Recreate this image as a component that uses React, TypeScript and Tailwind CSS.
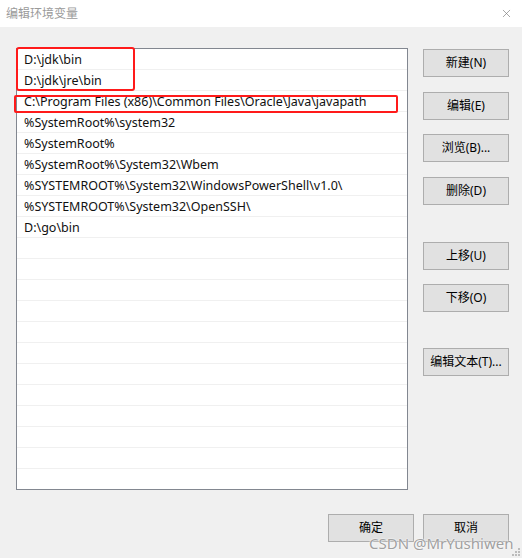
import { X } from 'lucide-react'

const paths = [
  'D:\\jdk\\bin',
  'D:\\jdk\\jre\\bin',
  'C:\\Program Files (x86)\\Common Files\\Oracle\\Java\\javapath',
  '%SystemRoot%\\system32',
  '%SystemRoot%',
  '%SystemRoot%\\System32\\Wbem',
  '%SYSTEMROOT%\\System32\\WindowsPowerShell\\v1.0\\',
  '%SYSTEMROOT%\\System32\\OpenSSH\\',
  'D:\\go\\bin',
]

const rows = [...paths, ...Array(21 - paths.length).fill('')]

function Button({ label, className = '' }: { label: string; className?: string }) {
  return (
    <button
      className={`h-[28px] w-[86px] border border-[#adadad] bg-[#e1e1e1] text-[12px] text-black ${className}`}
    >
      {label}
    </button>
  )
}

export default function App() {
  return (
    <div
      className="relative flex h-[558px] w-[522px] flex-col bg-[#f0f0f0]"
      style={{ fontFamily: '"Noto Sans", "Noto Sans CJK SC", sans-serif' }}
    >
      {/* Title bar */}
      <div className="flex h-[27px] items-center justify-between bg-white pl-[6px] pr-[9px]">
        <span className="text-[12px] text-[#9a9a9a]">编辑环境变量</span>
        <X className="h-[13px] w-[13px] text-[#777]" strokeWidth={1.2} />
      </div>

      <div className="flex pl-[16px] pt-[21px]">
        {/* Path list */}
        <div className="relative h-[442px] w-[392px] overflow-hidden border border-[#828790] bg-white">
          {rows.map((p, i) => (
            <div
              key={i}
              className="flex h-[21px] items-center border-b border-[#f0f0f0] pl-[7px] pt-[3px] text-[12.5px] leading-none text-[#111]"
            >
              {p}
            </div>
          ))}
        </div>

        {/* Action buttons */}
        <div className="ml-[15px] flex flex-col pt-px">
          <Button label="新建(N)" />
          <Button label="编辑(E)" className="mt-[15px]" />
          <Button label="浏览(B)..." className="mt-[14px]" />
          <Button label="删除(D)" className="mt-[15px]" />
          <Button label="上移(U)" className="mt-[37px]" />
          <Button label="下移(O)" className="mt-[14px]" />
          <Button label="编辑文本(T)..." className="mt-[36px]" />
        </div>
      </div>

      <div className="flex justify-end gap-[9px] pr-[13px] pt-[24px]">
        <Button label="确定" />
        <Button label="取消" />
      </div>

      {/* Highlight marks */}
      <div className="absolute left-[16px] top-[47px] h-[44px] w-[119px] rounded-[3px] border-2 border-[#ff1a1a]" />
      <div className="absolute left-[14px] top-[95px] h-[18px] w-[384px] rounded-[2px] border-2 border-[#ff1a1a]" />

      {/* Watermark */}
      <span
        className="absolute left-[369px] top-[532px] text-[15px] text-[#a0a0a0]"
        style={{ textShadow: '0 0 2px #fff, 0 0 1px #fff' }}
      >
        CSDN @MrYushiwen
      </span>

      {/* Resize grip */}
      <div className="absolute bottom-[2px] right-[2px] grid grid-cols-3 gap-[1px]">
        {[0, 0, 1, 0, 1, 1, 1, 1, 1].map((v, i) => (
          <div key={i} className={`h-[2px] w-[2px] ${v ? 'bg-[#bcbcbc]' : ''}`} />
        ))}
      </div>
    </div>
  )
}
